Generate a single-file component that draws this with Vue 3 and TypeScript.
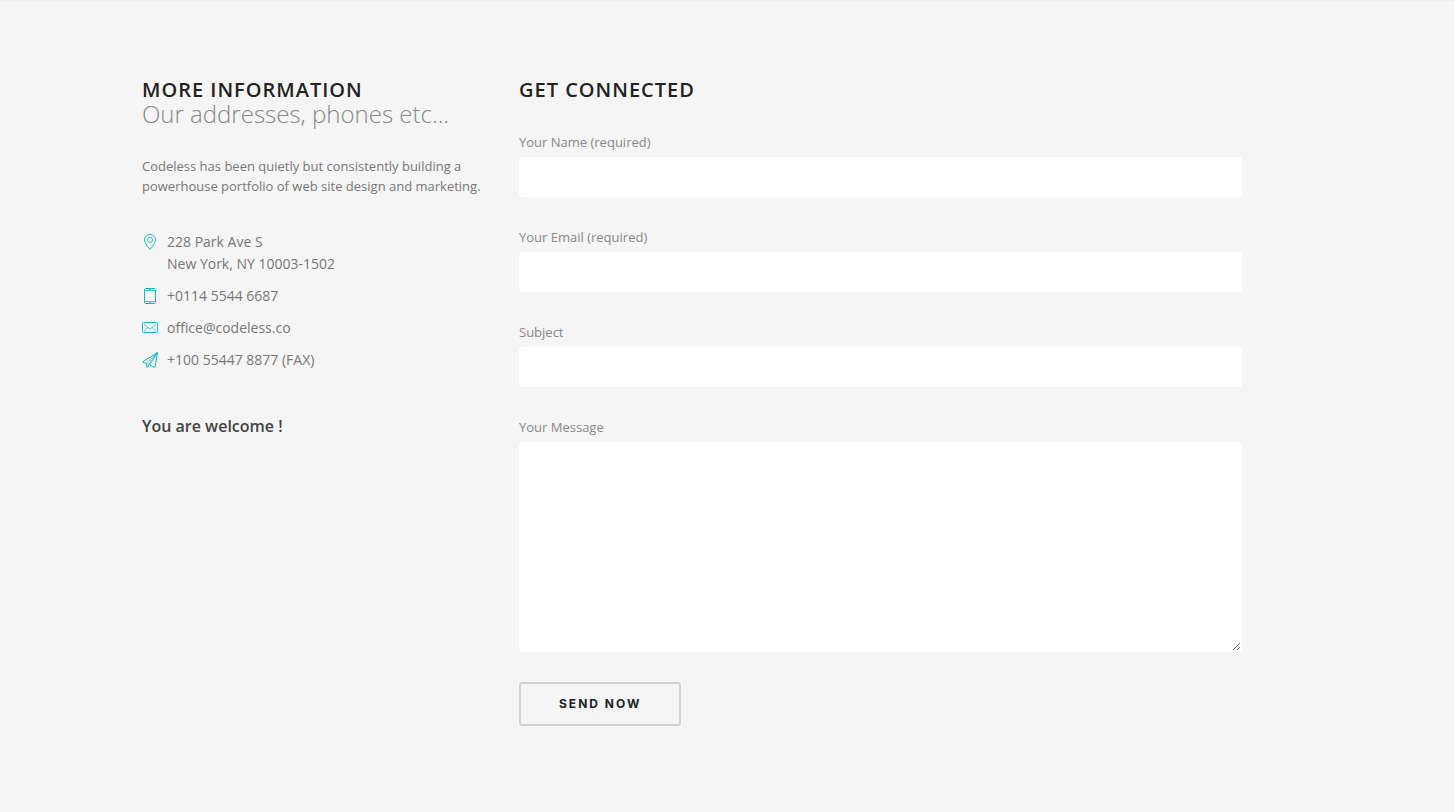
<script setup lang="ts">
import { reactive } from 'vue'

interface Field {
  id: 'name' | 'email' | 'subject'
  label: string
  type: string
  required: boolean
}

const fields: Field[] = [
  { id: 'name', label: 'Your Name (required)', type: 'text', required: true },
  { id: 'email', label: 'Your Email (required)', type: 'email', required: true },
  { id: 'subject', label: 'Subject', type: 'text', required: false },
]

const form = reactive({ name: '', email: '', subject: '', message: '' })
</script>

<template>
  <main class="contact">
    <div class="container">
      <section class="info">
        <h2 class="title">MORE INFORMATION</h2>
        <p class="subtitle">Our addresses, phones etc...</p>
        <p class="intro">
          Codeless has been quietly but consistently building a powerhouse portfolio of web site design and marketing.
        </p>
        <ul class="details">
          <li>
            <svg class="icon" viewBox="0 0 16 16" aria-hidden="true">
              <path d="M8 15.5C6.5 13.5 2.5 9.3 2.5 5.8a5.5 5.3 0 0 1 11 0C13.5 9.3 9.5 13.5 8 15.5z" />
              <circle class="fine" cx="8" cy="6" r="2.6" />
            </svg>
            <address>228 Park Ave S<br />New York, NY 10003-1502</address>
          </li>
          <li>
            <svg class="icon" viewBox="0 0 16 16" aria-hidden="true">
              <rect x="2.5" y="0.5" width="11" height="15" rx="1.2" />
              <path class="fine" d="M2.5 2.5h11M2.5 13.5h11M7 1.5h2M7.3 14.5h1.4" />
            </svg>
            <span>+0114 5544 6687</span>
          </li>
          <li>
            <svg class="icon" viewBox="0 0 16 16" aria-hidden="true">
              <rect x="0.5" y="2.5" width="15" height="10" rx="1" />
              <path class="fine" d="M2 4.2l6 5 6-5M2 11.2l3.7-3.6M14 11.2l-3.7-3.6" />
            </svg>
            <span>office@codeless.co</span>
          </li>
          <li>
            <svg class="icon" viewBox="0 0 16 16" aria-hidden="true">
              <path d="M15.5.5L.5 10l3.8 1.6.9 3.9 2.3-2.5 5.5 2.3z" />
              <path class="fine" d="M15.5.5L4.3 11.6M15.5.5L7.5 13M15.5.5L5.2 15.2" />
            </svg>
            <span>+100 55447 8877 (FAX)</span>
          </li>
        </ul>
        <h3 class="welcome">You are welcome !</h3>
      </section>

      <section class="connect">
        <h2 class="title">GET CONNECTED</h2>
        <form class="form" @submit.prevent>
          <div v-for="field in fields" :key="field.id" class="field">
            <label :for="field.id">{{ field.label }}</label>
            <input :id="field.id" v-model="form[field.id]" :type="field.type" :required="field.required" />
          </div>
          <div class="field">
            <label for="message">Your Message</label>
            <textarea id="message" v-model="form.message"></textarea>
          </div>
          <button class="send" type="submit">SEND NOW</button>
        </form>
      </section>
    </div>
  </main>
</template>

<style>
body {
  background: #f5f5f5;
}
</style>

<style scoped>
.contact {
  min-height: 100vh;
  box-sizing: border-box;
  padding: 79px 24px 80px;
  border-top: 1px solid #efefef;
  background: #f5f5f5;
  color: #777;
  font-family: "Open Sans", "Noto Sans", sans-serif;
}
.container {
  display: grid;
  grid-template-columns: minmax(0, 347fr) minmax(0, 723fr);
  column-gap: 30px;
  max-width: 1170px;
  margin: 0 auto;
  padding-right: 70px;
  box-sizing: border-box;
}
.title {
  margin: 0;
  color: #222;
  font-size: 20px;
  line-height: 20px;
  font-weight: 600;
  letter-spacing: 1px;
}
.subtitle {
  margin: 0;
  color: #888;
  font-size: 24px;
  line-height: 28px;
  font-weight: 300;
}
.intro {
  margin: 28px 0 0;
  font-size: 13px;
  line-height: 20px;
}
.details {
  margin: 35px 0 0;
  padding: 0;
  list-style: none;
  display: grid;
  row-gap: 10px;
  font-size: 14px;
  line-height: 22px;
}
.details li {
  display: flex;
  gap: 9px;
}
.details address {
  font-style: normal;
}
.icon {
  flex: none;
  width: 16px;
  height: 16px;
  margin-top: 3px;
  fill: none;
  stroke: #10b8c7;
  stroke-width: 1;
  stroke-linejoin: round;
}
.icon .fine {
  stroke-width: 0.8;
}
.welcome {
  margin: 44px 0 0;
  color: #444;
  font-size: 16px;
  line-height: 22px;
  font-weight: 600;
}
.form {
  margin-top: 32px;
}
.field {
  margin-bottom: 30px;
}
.field label {
  display: block;
  margin-bottom: 5px;
  color: #888;
  font-size: 13px;
  line-height: 20px;
}
.field input,
.field textarea {
  display: block;
  width: 100%;
  height: 40px;
  box-sizing: border-box;
  padding: 8px 12px;
  border: 1px solid #fff;
  border-radius: 3px;
  background: #fff;
  color: #555;
  font: inherit;
  font-size: 13px;
}
.field textarea {
  height: 210px;
  resize: both;
}
.send {
  display: block;
  padding: 10px 38px;
  border: 2px solid #d2d2d2;
  border-radius: 3px;
  background: transparent;
  color: #222;
  font-family: Inter, "Liberation Sans", sans-serif;
  font-size: 12px;
  line-height: 20px;
  font-weight: 700;
  letter-spacing: 2px;
  cursor: pointer;
}
</style>
